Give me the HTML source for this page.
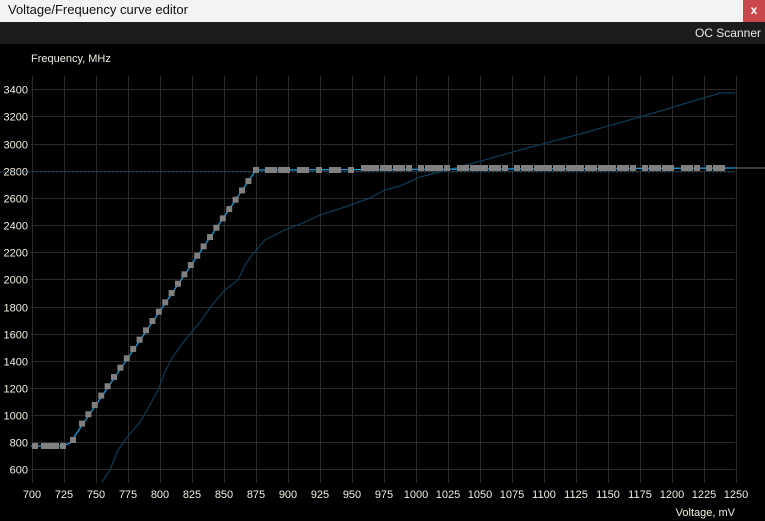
<!DOCTYPE html>
<html><head><meta charset="utf-8"><style>
html,body{margin:0;padding:0;width:765px;height:521px;overflow:hidden;background:#000;font-family:"Liberation Sans",Arial,sans-serif}
#t{position:absolute;left:0;top:0;width:765px;height:22px;background:#f3f3f3;color:#111;font-size:13px;line-height:20px}
#t span{position:absolute;left:8px;top:0}
#x{position:absolute;right:0;top:0;width:22px;height:22px;background:#c9484b;color:#fff;font-size:12px;text-align:center;line-height:20px;font-weight:bold}
#b{position:absolute;left:0;top:22px;width:765px;height:22px;background:#1c1c1c;color:#e8e8e8;font-size:12px;line-height:22px}
#b span{position:absolute;right:4px}
svg{position:absolute;left:0;top:44px}
text{font-family:"Liberation Sans",Arial,sans-serif;font-size:11px;fill:#f2efe0}
</style></head><body>
<div id="t"><span>Voltage/Frequency curve editor</span><div id="x">x</div></div>
<div id="b"><span>OC Scanner</span></div>
<svg id="s" width="765" height="477" viewBox="0 44 765 477" xmlns="http://www.w3.org/2000/svg">
<text x="31" y="62">Frequency, MHz</text>
<text x="735" y="516" text-anchor="end">Voltage, mV</text>
<g id="g"></g>
<line x1="0" y1="172" x2="735" y2="172" stroke="#1a4a66" stroke-width="1" stroke-dasharray="2,2"/>
<line x1="735" y1="168" x2="765" y2="168" stroke="#777" stroke-width="1"/>
<polyline fill="none" stroke="#0e3b55" stroke-width="1.2" points="102,482 110,470 118,450 125,440 140,422 150,405 158,390 165,372 172,358 185,340 200,322 212,305 225,290 238,280 245,265 252,255 265,240 285,230 305,222 320,215 345,207 370,198 385,190 400,186 420,177 440,172 470,164 520,150 580,134 640,117 690,102 720,93 735,93"/>
<polyline fill="none" stroke="#1a9be0" stroke-width="1.3" points="31,446 63,446 70,443 256,170 735,168"/>
<g id="q" fill="#808080"></g>
</svg>
<script>
var g=document.getElementById('g'),q=document.getElementById('q'),h='';
function X(v){return 31.7+(v-700)*1.28}
function Y(f){return 89.3+(3400-f)*0.13577}
for(var v=700;v<=1250;v+=25){var x=Math.round(X(v))+0.5;h+='<line x1="'+x+'" y1="76" x2="'+x+'" y2="483" stroke="#2a2a2a"/>';h+='<text x="'+(x-0.5)+'" y="498" text-anchor="middle">'+v+'</text>';}
for(var f=600;f<=3400;f+=200){var y=Math.round(Y(f))+0.5;h+='<line x1="31" y1="'+y+'" x2="735" y2="'+y+'" stroke="#2a2a2a"/>';h+='<text x="28" y="'+(y+4)+'" text-anchor="end">'+f+'</text>';}
g.innerHTML=h;
var s='',pts=[[35,446],[44,446],[50,446],[56,446],[63,446],[73,440]];
for(var x=82;x<=250;x+=6.4){pts.push([x,444-(x-68)*(274/188)]);}
var fl=[256,268,274,281,287,300,306,319,332,338,351,364,370,376,383,389,396,402,409,421,428,434,440,447,460,466,473,479,485,492,498,505,517,524,530,537,543,549,556,562,569,575,581,588,594,601,607,613,620,626,633,645,652,658,665,671,684,690,697,709,716,722];
fl.forEach(function(x){pts.push([x,x<360?170:168])});
pts.forEach(function(p){s+='<rect x="'+(p[0]-3)+'" y="'+(p[1]-3)+'" width="6" height="6"/>'});
q.innerHTML=s;
</script>
</body></html>
